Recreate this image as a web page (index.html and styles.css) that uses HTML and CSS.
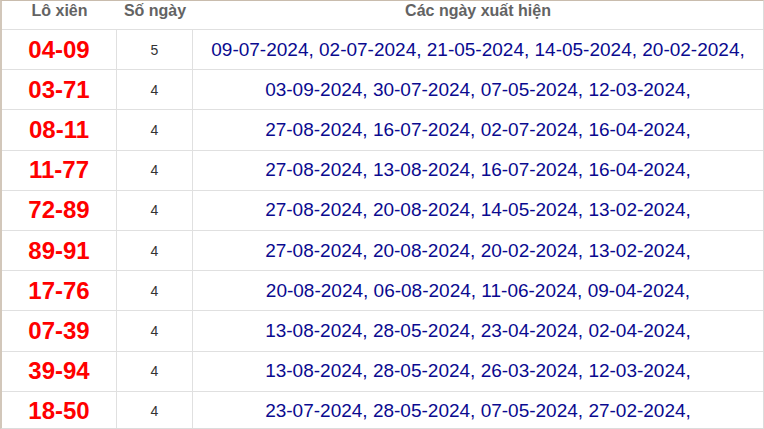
FILE: index.html
```html
<!DOCTYPE html>
<html lang="vi">
<head>
<meta charset="utf-8">
<title>Lô xiên</title>
<link rel="stylesheet" href="styles.css">
</head>
<body>
<div class="frame">
  <div class="grid">
    <div class="hd">Lô xiên</div>
    <div class="hd">Số ngày</div>
    <div class="hd">Các ngày xuất hiện</div>

    <div class="c pair">04-09</div><div class="c cnt">5</div><div class="c dates">09-07-2024, 02-07-2024, 21-05-2024, 14-05-2024, 20-02-2024,</div>
    <div class="c pair">03-71</div><div class="c cnt">4</div><div class="c dates">03-09-2024, 30-07-2024, 07-05-2024, 12-03-2024,</div>
    <div class="c pair">08-11</div><div class="c cnt">4</div><div class="c dates">27-08-2024, 16-07-2024, 02-07-2024, 16-04-2024,</div>
    <div class="c pair">11-77</div><div class="c cnt">4</div><div class="c dates">27-08-2024, 13-08-2024, 16-07-2024, 16-04-2024,</div>
    <div class="c pair">72-89</div><div class="c cnt">4</div><div class="c dates">27-08-2024, 20-08-2024, 14-05-2024, 13-02-2024,</div>
    <div class="c pair">89-91</div><div class="c cnt">4</div><div class="c dates">27-08-2024, 20-08-2024, 20-02-2024, 13-02-2024,</div>
    <div class="c pair">17-76</div><div class="c cnt">4</div><div class="c dates">20-08-2024, 06-08-2024, 11-06-2024, 09-04-2024,</div>
    <div class="c pair">07-39</div><div class="c cnt">4</div><div class="c dates">13-08-2024, 28-05-2024, 23-04-2024, 02-04-2024,</div>
    <div class="c pair">39-94</div><div class="c cnt">4</div><div class="c dates">13-08-2024, 28-05-2024, 26-03-2024, 12-03-2024,</div>
    <div class="c pair">18-50</div><div class="c cnt">4</div><div class="c dates">23-07-2024, 28-05-2024, 07-05-2024, 27-02-2024,</div>
  </div>
</div>
</body>
</html>
```

FILE: styles.css
```css
* { box-sizing: border-box; }
html, body { margin: 0; padding: 0; background: #fff; }
body { font-family: "Liberation Sans", Arial, sans-serif; }

.frame {
  width: 764px;
  height: 429px;
  overflow: hidden;
  border-left: 2px solid #d2c7ba;
  border-top: 1px solid #c9bcad;
  border-right: 1px solid #dcdcdc;
  border-bottom: 1px solid #dcdcdc;
}

.grid {
  display: grid;
  grid-template-columns: 115px 76px 570px;
  grid-template-rows: 29px repeat(10, 40.2px);
}

.hd {
  display: flex;
  justify-content: center;
  align-items: flex-start;
  padding-top: 1px;
  font-size: 16px;
  line-height: 18px;
  font-weight: bold;
  color: #636363;
  border-bottom: 1px solid #e0e0e0;
}

.c {
  display: flex;
  justify-content: center;
  align-items: center;
  border-bottom: 1px solid #e0e0e0;
  white-space: nowrap;
}

.pair {
  border-right: 1px solid #e0e0e0;
  font-size: 24px;
  font-weight: bold;
  color: #ff0000;
}

.cnt {
  border-right: 1px solid #e0e0e0;
  font-size: 14px;
  color: #333;
}

.dates {
  font-size: 19px;
  color: #0a0a8f;
}
```
